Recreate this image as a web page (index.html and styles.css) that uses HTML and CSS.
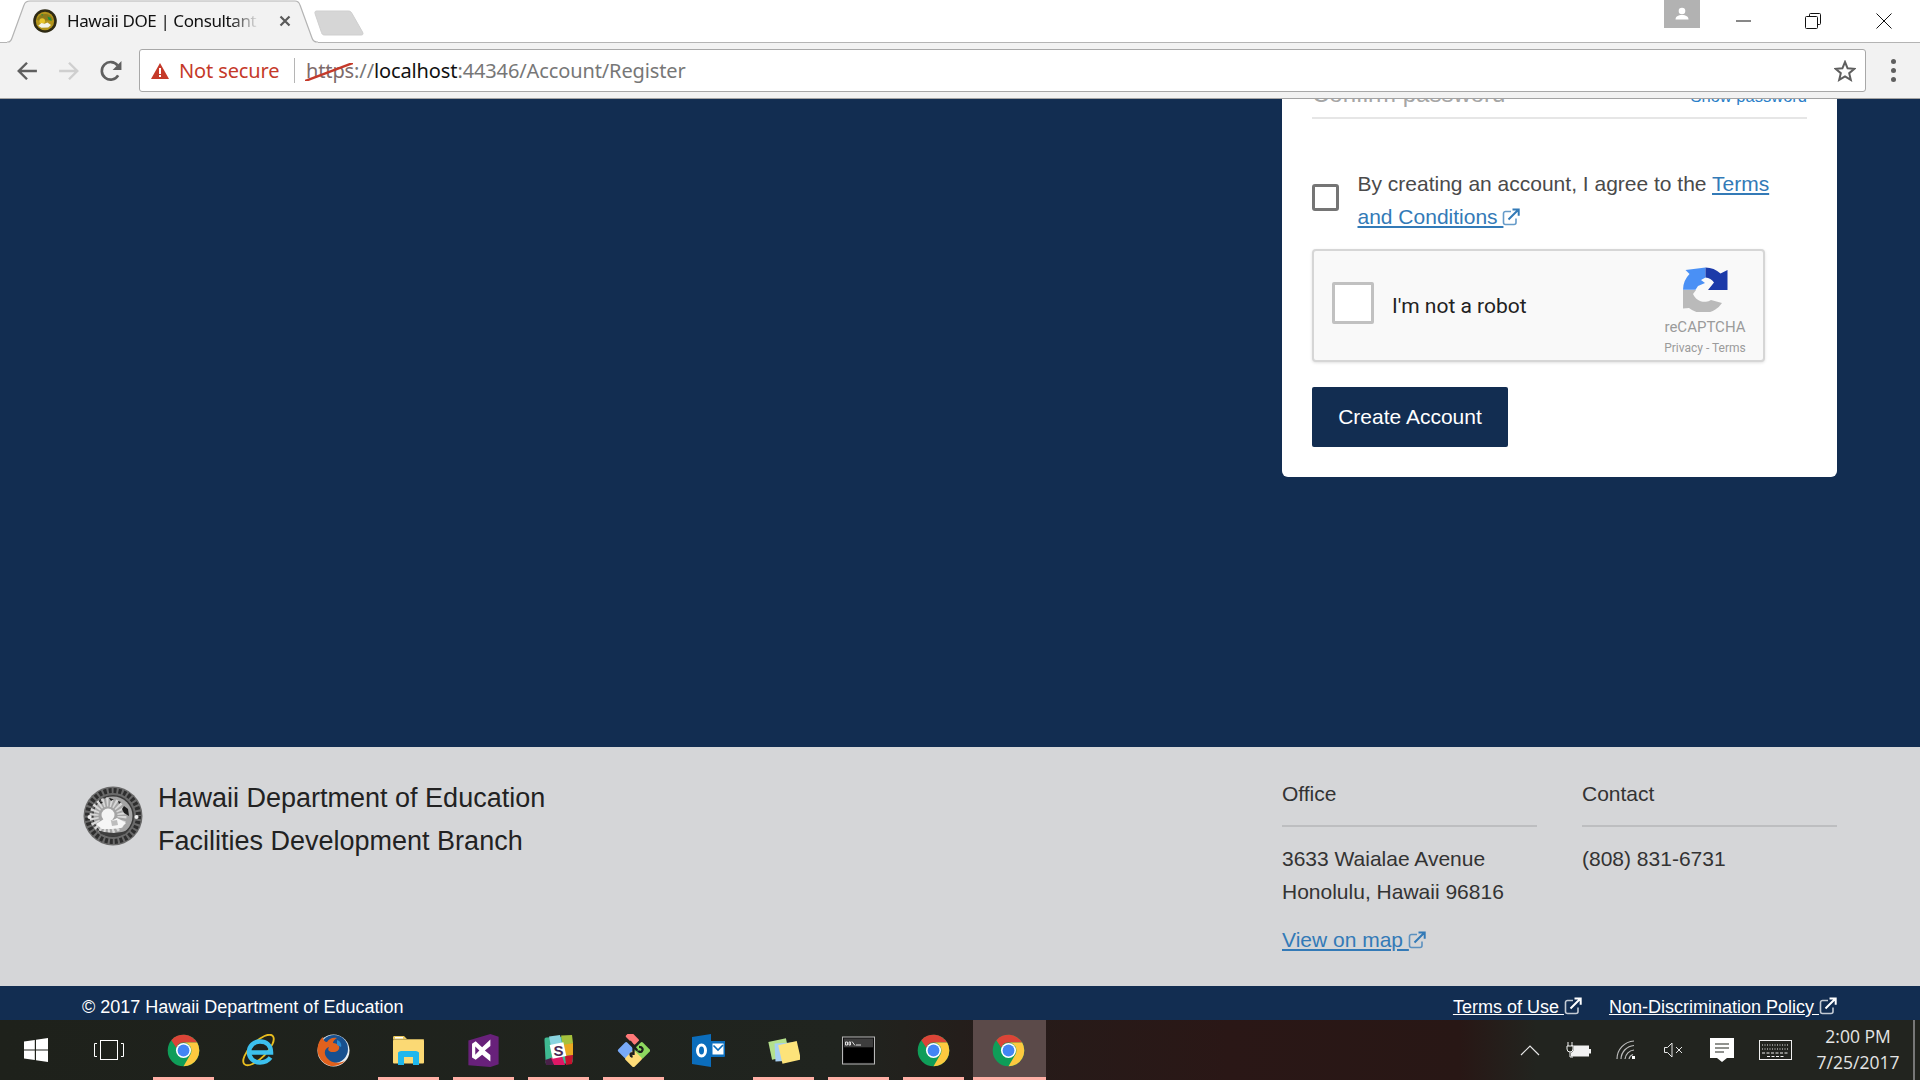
FILE: index.html
```html
<!DOCTYPE html>
<html lang="en">
<head>
<meta charset="utf-8">
<title>Hawaii DOE | Consultant</title>
<link rel="stylesheet" href="styles.css">
</head>
<body>
<svg class="sprite" aria-hidden="true">
  <symbol id="ext" viewBox="0 0 18 18">
    <path d="M9 3.500H3.500A2 2 0 0 0 1.500 5.500v9a2 2 0 0 0 2 2H12a2 2 0 0 0 2-2V10.500" fill="none" stroke="currentColor" stroke-width="1.600" opacity=".75"/>
    <path d="M6.500 11.500 15.500 2.500M10.500 1.500h6.200v6.200" fill="none" stroke="currentColor" stroke-width="2"/>
  </symbol>
  <symbol id="chrome" viewBox="0 0 48 48">
    <circle cx="24" cy="24" r="23" fill="#0f9d58"/>
    <path d="M6.300 9.200A23 23 0 0 1 43.900 12.500H24A11.500 11.500 0 0 0 13.500 20Z" fill="#db4437"/>
    <path d="M43.900 12.500H24A11.500 11.500 0 0 1 34 29.700L24 47A23 23 0 0 0 43.900 12.500Z" fill="#fdc93f"/>
    <circle cx="24" cy="24" r="11" fill="#fff"/>
    <circle cx="24" cy="24" r="8.600" fill="#4285f4"/>
  </symbol>
  <symbol id="seal" viewBox="0 0 60 60">
    <circle cx="30" cy="30" r="29.500" fill="#6a6a6a"/>
    <circle cx="30" cy="30" r="25.500" fill="none" stroke="#2e2e2e" stroke-width="5" stroke-dasharray="3 2"/>
    <circle cx="30" cy="30" r="21" fill="#3a3a3a"/>
    <circle cx="30" cy="30" r="19.500" fill="#a4a4a4"/>
    <circle cx="25" cy="30" r="14" fill="none" stroke="#d8d8d8" stroke-width="9" stroke-dasharray="2 2"/>
    <circle cx="25" cy="29" r="6.500" fill="#f4f4f4"/>
    <path d="M16 15l4 1-2 2zM26 12l5 1-3 2zM35 15l3 1-2 2zM41 20l4 3 1 7-5-3-2-4z" fill="#1e1e1e"/>
    <path d="M13 38l8-5 7 2 6-3 9 5-5 5-9 1-10 0z" fill="#f6f6f6"/>
    <path d="M28 35l6-1 1 5-6 1z" fill="#bdbdbd"/>
    <path d="M14 44q16 6 32 0l-4 4q-12 4-24 0z" fill="#3e3e3e"/>
    <circle cx="6.500" cy="31" r="2" fill="#eee"/>
    <circle cx="53.500" cy="31" r="2" fill="#eee"/>
  </symbol>
</svg>

<header class="browser">
  <div class="tabstrip">
    <div class="tab">
      <svg class="tab-shape" viewBox="0 0 311 43"><path d="M0 42H1C3 42 4 41 5 38L17 5C18 2 20 1 23 1H288C291 1 292 2 293 5L305 38C306 41 308 42 310 42H311V43H0Z" fill="#f2f2f2"/><path d="M0 42H1C3 42 4 41 5 38L17 5C18 2 20 1 23 1H288C291 1 292 2 293 5L305 38C306 41 308 42 310 42H311" fill="none" stroke="#b4b4b4" stroke-width="1.200"/></svg>
      <svg class="favicon" viewBox="0 0 60 60">
        <circle cx="30" cy="30" r="29.500" fill="#2e2a14"/>
        <circle cx="30" cy="30" r="23" fill="#b5961c"/>
        <path d="M10 27a21 21 0 0 1 40 0l-10 2H14z" fill="#8d7a1c"/>
        <circle cx="23" cy="30" r="7" fill="#e8c52a"/>
        <path d="M36 19l8 3 3 8-8-3zM20 13l6 1-3 3z" fill="#1f8f3a"/>
        <path d="M13 42l8-7 8 2 7-3 9 6-7 6-17 1z" fill="#f4f4ea"/>
      </svg>
      <span class="tab-title">Hawaii DOE | Consultant</span>
      <svg class="tab-close" viewBox="0 0 12 12"><path d="M1.500 1.500l9 9m0-9l-9 9" stroke="#5a5a5a" stroke-width="2.200"/></svg>
    </div>
    <svg class="newtab" viewBox="0 0 50 26"><path d="M1 3.500C.5 1.500 1.500 1 3 1H34C36 1 37 1.500 38 3.500L48.500 22C49.500 24 49 25 47 25H11C9 25 8 24.500 7.500 22.500Z" fill="#d6d6d6" stroke="#cfcfcf"/></svg>
    <div class="strip-right">
      <div class="profile">
        <svg class="profile-icon" viewBox="0 0 14 14"><circle cx="7" cy="4" r="3.300" fill="#fff"/><path d="M.5 12.500C.5 9.500 3 8 7 8s6.500 1.500 6.500 4.500Z" fill="#fff"/></svg>
      </div>
      <div class="winbtn winbtn-min"><svg class="wincon" viewBox="0 0 16 16"><path d="M0 8h15" stroke="#111" stroke-width="1"/></svg></div>
      <div class="winbtn"><svg class="wincon" viewBox="0 0 16 16"><path d="M4.500 3.500V1.500a1 1 0 0 1 1-1h9a1 1 0 0 1 1 1v9a1 1 0 0 1-1 1h-2" fill="none" stroke="#111"/><rect x=".5" y="3.500" width="12" height="12" rx="1" fill="none" stroke="#111"/></svg></div>
      <div class="winbtn"><svg class="wincon" viewBox="0 0 16 16"><path d="M.5.500l15 15m0-15l-15 15" stroke="#111"/></svg></div>
    </div>
  </div>
  <div class="toolbar">
    <div class="navbtn"><svg class="navicon" viewBox="0 0 20 20"><path d="M19 10H3M10 2.500 2.500 10l7.500 7.500" fill="none" stroke="#5f5f5f" stroke-width="2.200"/></svg></div>
    <div class="navbtn"><svg class="navicon" viewBox="0 0 20 20"><path d="M1 10h16M10 2.500 17.500 10 10 17.500" fill="none" stroke="#cfcfcf" stroke-width="2.200"/></svg></div>
    <div class="navbtn"><svg class="navicon" viewBox="0 0 20 20"><path d="M16.500 14A8 8 0 1 1 16 5" fill="none" stroke="#5f5f5f" stroke-width="2.400"/><path d="M19.500 1v8h-8z" fill="#5f5f5f"/></svg></div>
    <div class="urlbar">
      <svg class="warn" viewBox="0 0 18 16"><path d="M9 0l9 16H0z" fill="#c53929"/><path d="M8 5h2v6H8zM8 12h2v2H8z" fill="#fff"/></svg>
      <span class="notsecure">Not secure</span>
      <span class="urldiv"></span>
      <span class="url"><span class="scheme">https<svg class="strike" viewBox="0 0 48 18"><path d="M0 18 48 0" stroke="#c53929" stroke-width="2.500"/></svg></span><span class="dim">://</span><span class="host">localhost</span><span class="dim">:44346/Account/Register</span></span>
      <svg class="star" viewBox="0 0 22 22"><path d="M11 2l2.600 6.300 6.800.500-5.200 4.400 1.600 6.600L11 16.300 5.200 19.800l1.600-6.600L1.600 8.800l6.800-.500z" fill="none" stroke="#5f5f5f" stroke-width="2"/></svg>
    </div>
    <div class="menu"><i></i><i></i><i></i></div>
  </div>
</header>

<main class="viewport">
  <section class="card">
    <div class="field"><span class="field-label">Confirm password</span><a class="show" href="#">Show password</a></div>
    <div class="agree">
      <span class="agree-box"></span>
      <p class="agree-text">By creating an account, I agree to the <a href="#">Terms and Conditions </a><svg class="ext"><use href="#ext"/></svg></p>
    </div>
    <div class="captcha">
      <span class="captcha-box"></span>
      <span class="captcha-label">I'm not a robot</span>
      <div class="captcha-brand">
        <svg class="captcha-logo" viewBox="0 0 45 45">
          <path d="M0 22.700A22.500 22.500 0 0 1 6.500 7L2.500 3 22.500.500V10.500L18 13 22 16 15 19 12.500 22.700Z" fill="#4a90f5"/>
          <path d="M22.500.500A22.500 22.500 0 0 1 37.500 6.500L44.500 3V23H25L31 15.500A12 12 0 0 0 22.500 10.500Z" fill="#1c3aa9"/>
          <path d="M0 23H13L10 27A12.500 12.500 0 0 0 28 33L39 36A22.500 22.500 0 0 1 6 41L0 41.500Z" fill="#bababa"/>
        </svg>
        <span class="captcha-name">reCAPTCHA</span>
        <span class="captcha-links">Privacy - Terms</span>
      </div>
    </div>
    <button class="create" type="button">Create Account</button>
  </section>
</main>

<footer class="site-footer">
  <div class="brand">
    <svg class="seal"><use href="#seal"/></svg>
    <div class="brand-name">Hawaii Department of Education<br>Facilities Development Branch</div>
  </div>
  <div class="fcol">
    <h4 class="fhead">Office</h4>
    <p class="ftext">3633 Waialae Avenue<br>Honolulu, Hawaii 96816</p>
    <p class="fmap"><a href="#">View on map </a><svg class="ext"><use href="#ext"/></svg></p>
  </div>
  <div class="fcol">
    <h4 class="fhead">Contact</h4>
    <p class="ftext">(808) 831-6731</p>
  </div>
</footer>
<div class="legal">
  <span class="copy">© 2017 Hawaii Department of Education</span>
  <span class="legal-links">
    <span class="legal-link"><a href="#">Terms of Use </a><svg class="ext-sm"><use href="#ext"/></svg></span>
    <span class="legal-link"><a href="#">Non-Discrimination Policy </a><svg class="ext-sm"><use href="#ext"/></svg></span>
  </span>
</div>

<nav class="taskbar">
  <div class="tb-start"><svg class="winlogo" viewBox="0 0 24 24"><path d="M0 3.500 10.800 2V11.500H0ZM12 1.800 24 0V11.500H12ZM0 12.500H10.800V22L0 20.500ZM12 12.500H24V24L12 22.200Z" fill="#fff"/></svg></div>
  <div class="tb-view"><svg class="taskview" viewBox="0 0 30 20"><path d="M3 3.500H.5v13H3M27 3.500h2.500v13H27" fill="none" stroke="#fff"/><rect x="6.500" y=".5" width="17" height="19" fill="none" stroke="#fff" stroke-width="1"/></svg></div>

  <div class="tb-item run"><svg class="tb-icon"><use href="#chrome"/></svg></div>
  <div class="tb-item"><svg class="tb-icon" viewBox="0 0 33 33">
    <ellipse cx="16.500" cy="16" rx="20" ry="8" transform="rotate(-45 16.500 16)" fill="none" stroke="#e8bd1f" stroke-width="1.900"/>
    <path d="M8 18.500H29C29 11 24 7.500 18 7.500S7 12 7 18C7 24.500 12 28.500 18 28.500 22 28.500 26 27 28.500 23.500" fill="none" stroke="#3cc0ee" stroke-width="4.500"/>
  </svg></div>
  <div class="tb-item"><svg class="tb-icon" viewBox="0 0 33 33">
    <circle cx="16.500" cy="16.500" r="16" fill="#e8eef2"/>
    <circle cx="17" cy="15" r="14" fill="#17508f"/>
    <path d="M6 3C3 5 .5 10 .5 16.500A16 16 0 0 0 29 26C24 30 15 30 10 24 6 19 8 14 12 13c-2 3 0 5 4 5 5 0 7-3 6-6-1-2-4-3-6-3 0-2 2-4 4-5C15 3 12 5 10 8 8 8 6 6 6 3Z" fill="#e0611d"/>
    <path d="M20 6c3 1 5 4 4 7l-4-2z" fill="#2a8bd0"/>
  </svg></div>
  <div class="tb-item run"><svg class="tb-icon" viewBox="0 0 33 33">
    <path d="M1 3.500C1 2.500 1.500 2 2.500 2H12l3 3H32V5.500H1Z" fill="#e8c860"/>
    <path d="M3 3h8v1.500H3z" fill="#fff" />
    <rect x="1" y="5.500" width="31" height="24" rx="1" fill="#fbd974"/>
    <path d="M6 31V18.500A4 4 0 0 1 10 17H23a4 4 0 0 1 4 1.500V31h-6V23H12v8Z" fill="#1fb7ec"/>
  </svg></div>
  <div class="tb-item run"><svg class="tb-icon" viewBox="0 0 33 36">
    <path d="M0 7v27l24 2 9-3V3L24 0Z" fill="#68217a"/>
    <path d="M24 6v7l-6 5 6 5v7l-9-7.500L8 28l-4-2.500V10.500L8 8l7 6.500ZM7.500 13.500v9l4.500-4.500Z" fill="#fff"/>
  </svg></div>
  <div class="tb-item run"><svg class="tb-icon" viewBox="0 0 33 33">
    <rect x="3" y="3" width="27" height="27" rx="2" fill="#3eb991" transform="rotate(-3 16 16)"/>
    <path d="M7 2.500 18 1l2 9L9 13Z" fill="#89d3df"/>
    <path d="M19 1.500 30 1l1 8-10 3Z" fill="#a5c13c"/>
    <path d="M21 11l10-2 0 12-8 1Z" fill="#e9a820"/>
    <path d="M8 24l12-2 3 9L12 31Z" fill="#e01765"/>
    <path d="M23 22l8-1-1 9-6 1z" fill="#c8112e"/>
    <path d="M3 26l6-2 3 7-8 0z" fill="#4a2149"/>
    <rect x="9" y="9.500" width="14" height="14" transform="rotate(-12 16 16.500)" fill="#fff"/>
    <text class="slack-s" x="16.500" y="22" text-anchor="middle">S</text>
  </svg></div>
  <div class="tb-item run"><svg class="tb-icon" viewBox="0 0 36 36">
    <rect x="14" y="2" width="14" height="8" rx="1.500" fill="#ff7878" transform="rotate(45 21 6) translate(-4 2)"/>
    <rect x="3" y="11" width="14" height="14" rx="2" fill="#78aaf8" transform="rotate(45 10 18)"/>
    <rect x="20" y="11" width="14" height="14" rx="2" fill="#8ed85f" transform="rotate(45 27 18)"/>
    <rect x="11" y="20" width="14" height="14" rx="2" fill="#ffdc78" transform="rotate(45 18 27)"/>
    <path d="M18 12v11M14 8l8 10M17 25c-3-1-3-4 0-4M24 14c4 0 5 3 3 5-2 1-4 0-4-1" fill="none" stroke="#1d1d1d" stroke-width="2.500"/>
  </svg></div>
  <div class="tb-item"><svg class="tb-icon" viewBox="0 0 33 33">
    <path d="M19 7h14v15a1 1 0 0 1-1 1H19Z" fill="#0b6dbc"/>
    <path d="M20.500 9.500h11v11h-11Z" fill="#fff"/>
    <path d="M21.500 11.500 26 16l5-5" fill="none" stroke="#0b6dbc" stroke-width="1.600"/>
    <path d="M0 3 19 0V33L0 30Z" fill="#0b6dbc"/>
    <ellipse cx="9.500" cy="16.500" rx="4" ry="5.500" fill="none" stroke="#fff" stroke-width="3"/>
  </svg></div>
  <div class="tb-item run"><svg class="tb-icon" viewBox="0 0 33 33">
    <rect x="3" y="6" width="18" height="18" transform="rotate(-12 12 15)" fill="#b4e08c"/>
    <rect x="8" y="9" width="18" height="18" transform="rotate(-3 17 18)" fill="#a6cff2"/>
    <rect x="13" y="9" width="19" height="19" transform="rotate(-13 22 18)" fill="#fde37a"/>
  </svg></div>
  <div class="tb-item run"><svg class="tb-icon" viewBox="0 0 33 28">
    <rect x=".5" y=".5" width="32" height="27" fill="#111" stroke="#b8b8b8"/>
    <rect x="2" y="2" width="29" height="9" fill="#3d3d3d"/>
    <rect x="2" y="11" width="29" height="15" fill="#000"/>
    <path d="M3.500 5.500h2v3h-2zM7 5.500h1.500v3H7zM10 5l3 4M14 8.500h5" fill="none" stroke="#ddd" stroke-width="1"/>
  </svg></div>
  <div class="tb-item run"><svg class="tb-icon"><use href="#chrome"/></svg></div>
  <div class="tb-item run active"><svg class="tb-icon"><use href="#chrome"/></svg></div>

  <div class="tray">
    <div class="tr w48"><svg class="tr-chev" viewBox="0 0 20 11"><path d="M1 10 10 1l9 9" fill="none" stroke="#e6e6e6" stroke-width="1.200"/></svg></div>
    <div class="tr w48"><svg class="tr-batt" viewBox="0 0 25 16"><rect x="5" y="3.500" width="18" height="11" fill="#f2f2f2"/><path d="M23 7h2v4.500h-2z" fill="#f2f2f2"/><path d="M0 4h7.500v3a3.500 3.500 0 0 1-7.500 0z" fill="#23261f"/><path d="M2 0v4M6 0v4M1 4h6v3a3 3 0 0 1-6 0zM4 10v5h3" fill="none" stroke="#f2f2f2"/></svg></div>
    <div class="tr w48"><svg class="tr-wifi" viewBox="0 0 20 20"><path d="M1 19A18 18 0 0 1 18 1M5 19A14 14 0 0 1 18 5.500M9 19a10 10 0 0 1 9-9M13 19a6 6 0 0 1 4-4.500" fill="none" stroke="#bdbdbd" stroke-width="1.200"/><rect x="16" y="16" width="3" height="3" fill="#fff"/></svg></div>
    <div class="tr w47"><svg class="tr-vol" viewBox="0 0 20 16"><path d="M.5 5.500h3L8 1v14L3.500 10.500h-3zM12 5l6 6m0-6-6 6" fill="none" stroke="#e6e6e6"/></svg></div>
    <div class="tr w50"><svg class="tr-action" viewBox="0 0 24 24"><path d="M0 0h24v20h-7l-5 4-5-4H0z" fill="#fff"/><path d="M5 6h14M5 10h14M5 14h9" stroke="#23261f" stroke-width="1.200"/></svg></div>
    <div class="tr w56"><svg class="tr-kbd" viewBox="0 0 33 20"><rect x=".5" y=".5" width="32" height="19" fill="none" stroke="#f0f0f0"/><path d="M3 5h27M3 9h27" stroke="#f0f0f0" stroke-dasharray="1 1.500"/><path d="M3 13h27M8 16.500h17" stroke="#f0f0f0" stroke-dasharray="3 1.500"/></svg></div>
    <div class="clock"><span>2:00 PM</span><span>7/25/2017</span></div>
    <div class="showdesk"></div>
  </div>
</nav>
</body>
</html>
```
FILE: styles.css
```css
* { box-sizing: border-box; }
html, body { margin: 0; padding: 0; }
body { width: 1920px; height: 1080px; overflow: hidden; display: flex; flex-direction: column; font-family: "Liberation Sans", Arial, sans-serif; background: #122d51; }
a { color: inherit; }
p, h4 { margin: 0; font-weight: 400; }
.sprite { display: none; }

/* browser chrome */
.browser { flex: none; height: 99px; font-family: "Noto Sans", "Open Sans", sans-serif; background: #fff; }
.tabstrip { height: 43px; display: flex; padding-left: 7px; border-bottom: 1px solid #b4b4b4; position: relative; }
.tab { position: relative; width: 311px; height: 43px; display: flex; align-items: center; padding-left: 26px; padding-bottom: 2px; flex: none; }
.tab-shape { position: absolute; left: 0; top: 0; width: 311px; height: 43px; }
.favicon { position: relative; width: 24px; height: 24px; flex: none; }
.tab-title { position: relative; width: 192px; margin-left: 10px; font-size: 17px; letter-spacing: -.4px; color: #111; white-space: nowrap; overflow: hidden; -webkit-mask-image: linear-gradient(90deg, #000 85%, transparent); mask-image: linear-gradient(90deg, #000 85%, transparent); }
.tab-close { position: relative; width: 12px; height: 12px; margin-left: 20px; flex: none; }
.newtab { width: 50px; height: 26px; margin: 10px 0 0 -4px; flex: none; }
.strip-right { margin-left: auto; display: flex; padding-right: 1px; }
.profile { width: 36px; height: 28px; background: #b2b2b2; display: flex; align-items: center; justify-content: center; margin-right: 6px; }
.profile-icon { width: 14px; height: 14px; }
.winbtn { width: 71px; height: 41px; display: flex; align-items: flex-start; justify-content: center; padding-top: 13px; }
.winbtn-min { padding-left: 4px; }
.wincon { width: 16px; height: 16px; }

.toolbar { height: 56px; background: #f2f2f2; border-bottom: 1px solid #a3a3a3; display: flex; align-items: center; padding-left: 6px; }
.navbtn { width: 42px; height: 42px; display: flex; align-items: center; justify-content: center; flex: none; }
.navicon { width: 22px; height: 22px; }
.urlbar { flex: 1; height: 43px; margin-left: 7px; background: #fff; border: 1px solid #a8a8a8; border-radius: 3px; display: flex; align-items: center; padding-left: 11px; font-size: 20px; letter-spacing: -.12px; white-space: nowrap; }
.warn { width: 18px; height: 16px; flex: none; }
.notsecure { margin-left: 10px; width: 100px; color: #c53929; }
.urldiv { width: 1px; height: 25px; background: #b5b5b5; margin: 0 11px 0 15px; flex: none; }
.url { color: #777; }
.scheme { position: relative; display: inline-block; color: #7d6b6b; }
.strike { position: absolute; left: -1px; top: 6px; width: 48px; height: 18px; }
.dim { color: #777; }
.host { color: #111; }
.star { width: 22px; height: 22px; margin-left: auto; margin-right: 9px; flex: none; }
.menu { width: 54px; display: flex; flex-direction: column; align-items: center; gap: 4px; flex: none; }
.menu i { width: 5px; height: 5px; border-radius: 50%; background: #5f5f5f; }

/* page */
.viewport { flex: none; height: 648px; overflow: hidden; background: #122d51; display: flex; justify-content: flex-end; padding-right: 83px; }
.card { width: 555px; height: 401px; margin-top: -23px; background: #fff; border-radius: 0 0 6px 6px; padding: 0 30px; display: flex; flex-direction: column; align-items: flex-start; flex: none; }
.field { width: 100%; height: 43px; border-bottom: 2px solid #e6e6e6; display: flex; justify-content: space-between; align-items: baseline; line-height: 36px; }
.field-label { font-size: 24px; color: #a6a6a6; }
.show { font-size: 16.500px; color: #2a7fc9; text-decoration: none; }
.agree { display: flex; gap: 18.500px; margin-top: 48px; }
.agree-box { width: 27px; height: 27px; margin-top: 17px; border: 3px solid #757575; border-radius: 3px; flex: none; }
.agree-text { width: 449px; font-size: 21px; line-height: 33px; color: #4a4a4a; }
.agree-text a, .fmap a { color: #337ab7; text-decoration: underline; }
.ext { width: 18px; height: 18px; color: #337ab7; vertical-align: -2px; margin-left: -1px; }
.captcha { width: 453px; height: 113px; margin-top: 16px; background: #f9f9f9; border: 2px solid #d6d6d6; border-radius: 4px; box-shadow: 0 1px 3px rgba(0,0,0,.12); display: flex; align-items: center; padding-left: 18px; font-family: Roboto, sans-serif; }
.captcha-box { width: 42px; height: 42px; margin-top: -5px; background: #fff; border: 3px solid #c1c1c1; border-radius: 2px; flex: none; }
.captcha-label { margin-left: 18px; font-size: 21px; color: #222; }
.captcha-brand { margin-left: auto; width: 96px; margin-right: 10px; align-self: stretch; padding-top: 16px; display: flex; flex-direction: column; align-items: center; color: #9b9b9b; }
.captcha-logo { width: 45px; height: 45px; flex: none; }
.captcha-name { font-size: 15px; line-height: 18px; margin-top: 6px; }
.captcha-links { font-size: 12px; line-height: 16px; margin-top: 4px; }
.create { width: 196px; height: 60px; margin-top: 25px; background: #122d51; color: #fff; border: 0; border-radius: 2px; font: 21px "Liberation Sans", Arial, sans-serif; padding: 0; }

/* footer */
.site-footer { flex: none; height: 239px; background: #d5d6d8; padding: 29px 83px 0; display: flex; gap: 45px; color: #333; font-size: 21px; line-height: 33px; }
.brand { flex: 1; display: flex; gap: 15px; align-items: flex-start; }
.seal { width: 60px; height: 60px; margin-top: 10px; flex: none; }
.brand-name { font-size: 27px; line-height: 43px; color: #222; margin-top: 1px; }
.fcol { width: 255px; flex: none; margin-top: 1px; }
.fhead { font-size: 21px; padding: 0 0 15px 0; border-bottom: 2px solid #bdbec0; }
.ftext { margin-top: 15px; }
.fmap { margin-top: 15px; }

.legal { flex: none; height: 34px; overflow: hidden; background: #122d51; color: #fff; font-size: 18px; line-height: 27px; padding: 8px 83px 0 82px; display: flex; justify-content: space-between; }
.legal-links { display: flex; gap: 27px; }
.legal-link a { text-decoration: underline; }
.ext-sm { width: 18px; height: 18px; color: #fff; vertical-align: -2px; }

/* taskbar */
.taskbar { flex: none; height: 60px; display: flex; color: #fff; background: linear-gradient(90deg, #1e211b 0, #20241f 44%, #261b19 53%, #2a1716 64%, #281715 76%, #22241f 80%, #22241f 100%); }
.tb-start { width: 72px; display: flex; align-items: center; justify-content: center; flex: none; }
.winlogo { width: 24px; height: 24px; }
.tb-view { width: 74px; display: flex; align-items: center; justify-content: center; flex: none; }
.taskview { width: 30px; height: 20px; }
.tb-item { position: relative; width: 75px; display: flex; align-items: center; justify-content: center; flex: none; }
.tb-icon { width: 33px; height: 33px; }
.tb-item.run::after { content: ""; position: absolute; left: 7px; right: 7px; bottom: 0; height: 3px; background: #ffb0a6; }
.tb-item.active { background: #5b4a49; width: 73px; margin-left: 2px; padding-right: 2px; }
.tb-item.active::after { left: 0; right: 0; }
.slack-s { font: 700 15px "Liberation Sans", Arial, sans-serif; fill: #4a2a55; }

.tray { margin-left: auto; display: flex; align-items: center; height: 100%; }
.tr { display: flex; align-items: center; justify-content: center; height: 100%; }
.w48 { width: 48px; } .w47 { width: 47px; } .w50 { width: 50px; } .w56 { width: 56px; }
.tr-chev { width: 20px; height: 11px; }
.tr-batt { width: 25px; height: 16px; }
.tr-wifi { width: 20px; height: 20px; }
.tr-vol { width: 20px; height: 16px; }
.tr-action { width: 24px; height: 24px; }
.tr-kbd { width: 33px; height: 20px; }
.clock { width: 110px; padding-bottom: 2px; display: flex; flex-direction: column; align-items: center; font: 17.500px/26px "Open Sans", sans-serif; color: #e4e4e4; }
.showdesk { width: 7px; height: 100%; border-left: 2px solid #777; }
```
